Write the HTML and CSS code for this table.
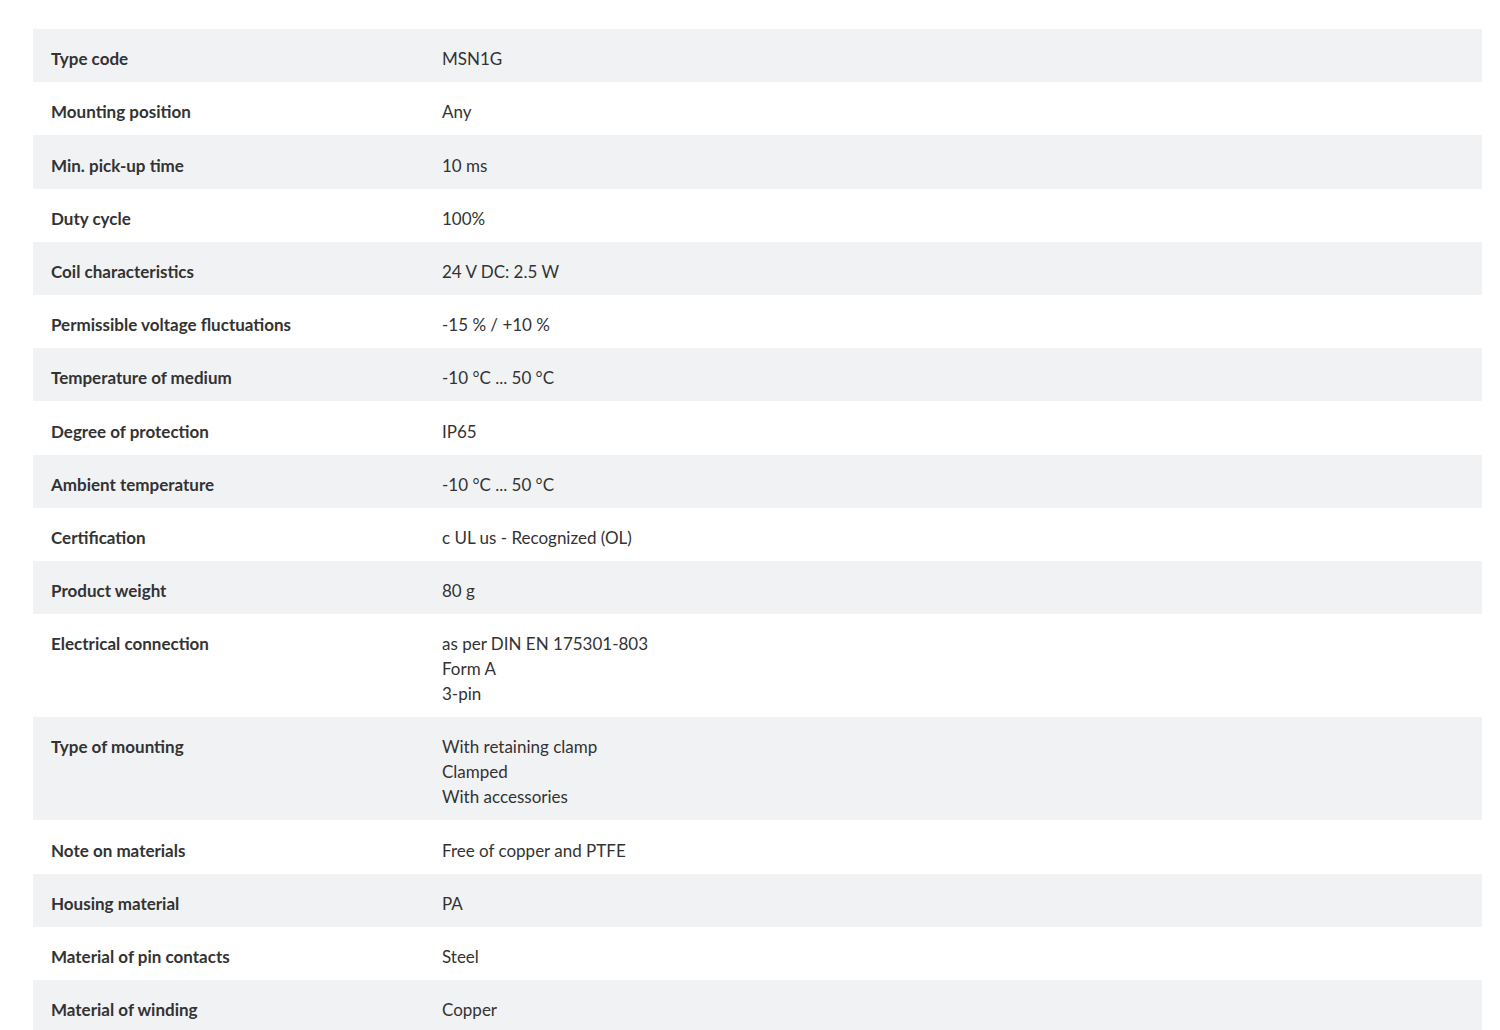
FILE: index.html
```html
<!DOCTYPE html>
<html lang="en">
<head>
<meta charset="utf-8">
<title>Technical data</title>
<link rel="stylesheet" href="styles.css">
</head>
<body>
<main class="page">
  <div class="spec-table">
    <div class="row"><div class="label">Type code</div><div class="value">MSN1G</div></div>
    <div class="row"><div class="label">Mounting position</div><div class="value">Any</div></div>
    <div class="row"><div class="label">Min. pick-up time</div><div class="value">10 ms</div></div>
    <div class="row"><div class="label">Duty cycle</div><div class="value">100%</div></div>
    <div class="row"><div class="label">Coil characteristics</div><div class="value">24 V DC: 2.5 W</div></div>
    <div class="row"><div class="label">Permissible voltage fluctuations</div><div class="value">-15 % / +10 %</div></div>
    <div class="row"><div class="label">Temperature of medium</div><div class="value">-10 °C ... 50 °C</div></div>
    <div class="row"><div class="label">Degree of protection</div><div class="value">IP65</div></div>
    <div class="row"><div class="label">Ambient temperature</div><div class="value">-10 °C ... 50 °C</div></div>
    <div class="row"><div class="label">Certification</div><div class="value">c UL us - Recognized (OL)</div></div>
    <div class="row"><div class="label">Product weight</div><div class="value">80 g</div></div>
    <div class="row"><div class="label">Electrical connection</div><div class="value">as per DIN EN 175301-803<br>Form A<br>3-pin</div></div>
    <div class="row"><div class="label">Type of mounting</div><div class="value">With retaining clamp<br>Clamped<br>With accessories</div></div>
    <div class="row"><div class="label">Note on materials</div><div class="value">Free of copper and PTFE</div></div>
    <div class="row"><div class="label">Housing material</div><div class="value">PA</div></div>
    <div class="row"><div class="label">Material of pin contacts</div><div class="value">Steel</div></div>
    <div class="row"><div class="label">Material of winding</div><div class="value">Copper</div></div>
  </div>
</main>
</body>
</html>
```

FILE: styles.css
```css
html, body {
  margin: 0;
  padding: 0;
  background: #ffffff;
}

body {
  font-family: Lato, "Open Sans", "Liberation Sans", sans-serif;
  font-size: 17px;
  line-height: 25px;
  color: #333333;
}

.page {
  padding: 29px 18px 0 33px;
}

.spec-table {
  display: flex;
  flex-direction: column;
}

.row {
  display: grid;
  grid-template-columns: 391px 1fr;
  padding: 17.2px 18px 11px 18px;
}

.row:nth-child(odd) {
  background: #f1f2f3;
}

.label {
  font-weight: bold;
}

.value {
  font-weight: normal;
}
```
